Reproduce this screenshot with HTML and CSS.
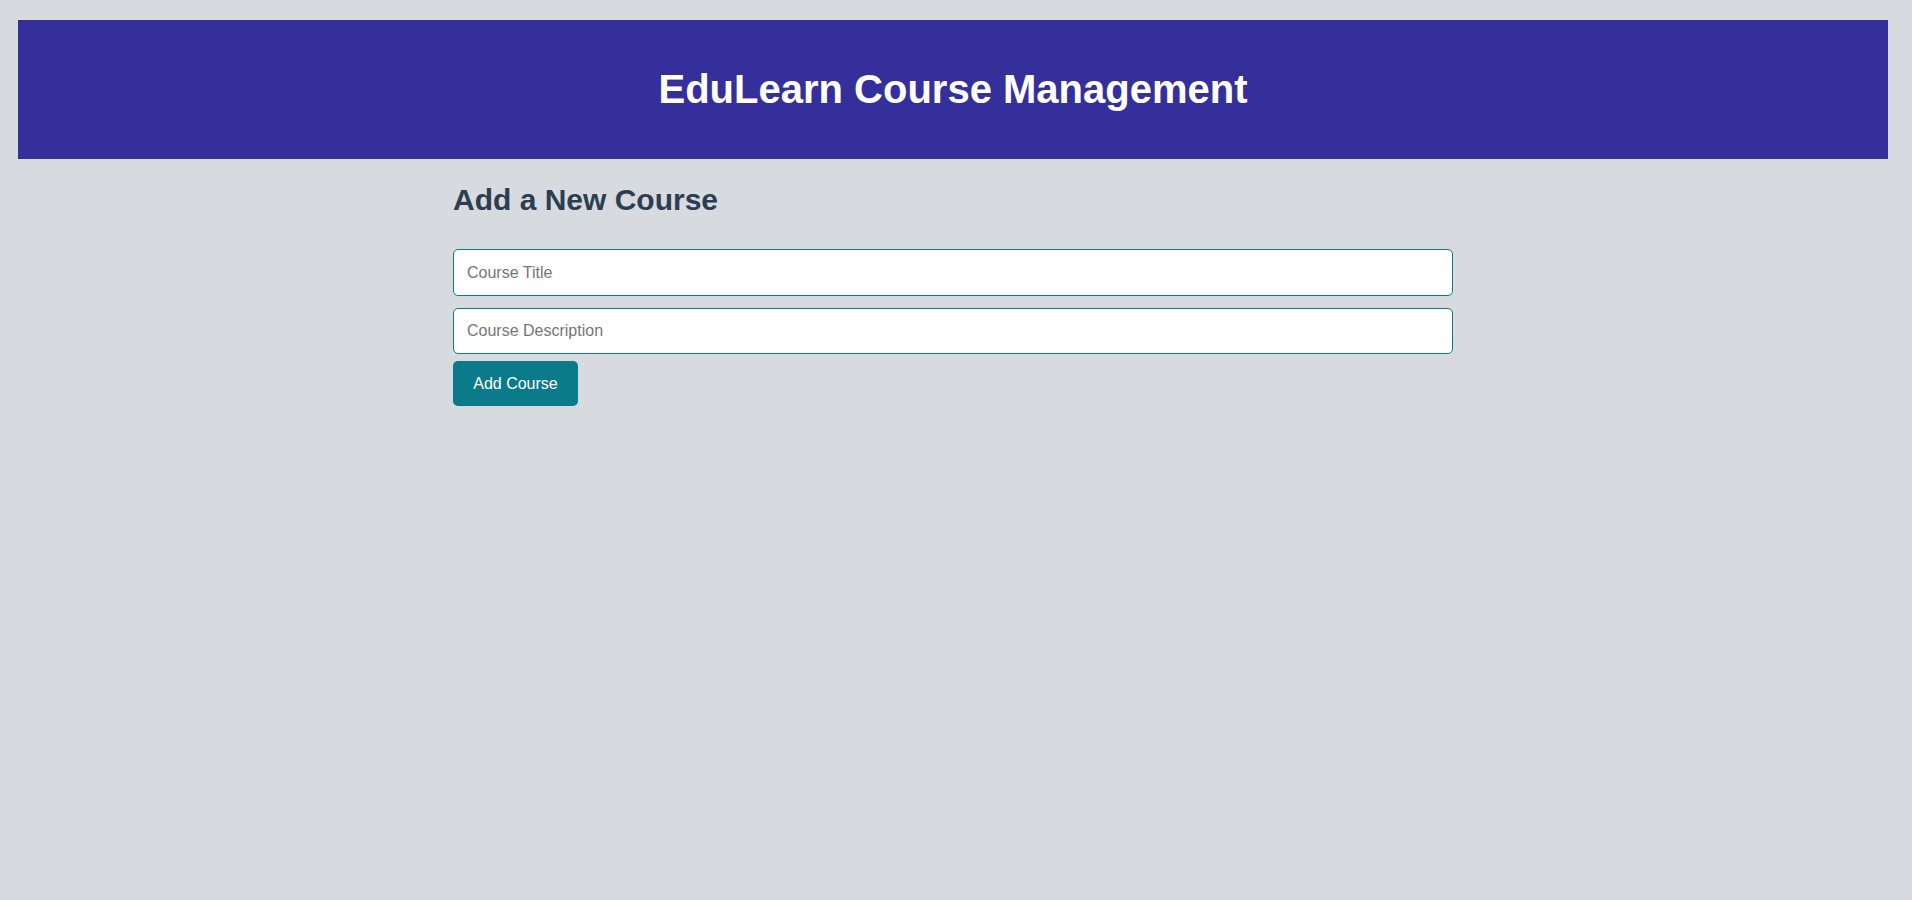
FILE: index.html
```html
<!DOCTYPE html>
<html lang="en">
<head>
<meta charset="utf-8">
<title>EduLearn Course Management</title>
<link rel="stylesheet" href="styles.css">
</head>
<body>
<div class="page">
  <header class="site-header">
    <h1 class="site-title">EduLearn Course Management</h1>
  </header>
  <main class="container">
    <h2 class="section-title">Add a New Course</h2>
    <form class="course-form">
      <input class="field" type="text" placeholder="Course Title">
      <input class="field field-desc" type="text" placeholder="Course Description">
      <button class="btn" type="button">Add Course</button>
    </form>
  </main>
</div>
</body>
</html>
```
FILE: styles.css
```css
html, body {
  margin: 0;
  padding: 0;
  background: #d7dadf;
  font-family: "Liberation Sans", Arial, sans-serif;
}
.page {
  padding: 20px 24px 0 18px;
  min-height: 880px;
}
.site-header {
  background: #352f9c;
  padding: 20px;
  text-align: center;
}
.site-title {
  margin: 26px 0 27px;
  font-size: 40px;
  font-weight: bold;
  color: #ffffff;
  line-height: 46px;
}
.container {
  width: 1000px;
  margin: 0 auto;
}
.section-title {
  margin: 24px 0 32px;
  font-size: 30px;
  font-weight: bold;
  color: #2c3e50;
  line-height: 34px;
}
.course-form {
  display: flex;
  flex-direction: column;
  align-items: flex-start;
}
.field {
  box-sizing: border-box;
  width: 1000px;
  height: 47px;
  padding: 0 13px;
  border: 1px solid #0e7c86;
  border-radius: 5px;
  background: #ffffff;
  font-family: "Liberation Sans", Arial, sans-serif;
  font-size: 16px;
  color: #333;
  outline: none;
}
.field::placeholder {
  color: #757575;
}
.field-desc {
  margin-top: 12px;
  height: 46px;
}
.btn {
  box-sizing: border-box;
  margin-top: 7px;
  min-width: 125px;
  height: 45px;
  padding: 0 20px;
  border: none;
  border-radius: 5px;
  background: #0b7a8a;
  color: #ffffff;
  font-family: "Liberation Sans", Arial, sans-serif;
  font-size: 16px;
  cursor: pointer;
}
```
